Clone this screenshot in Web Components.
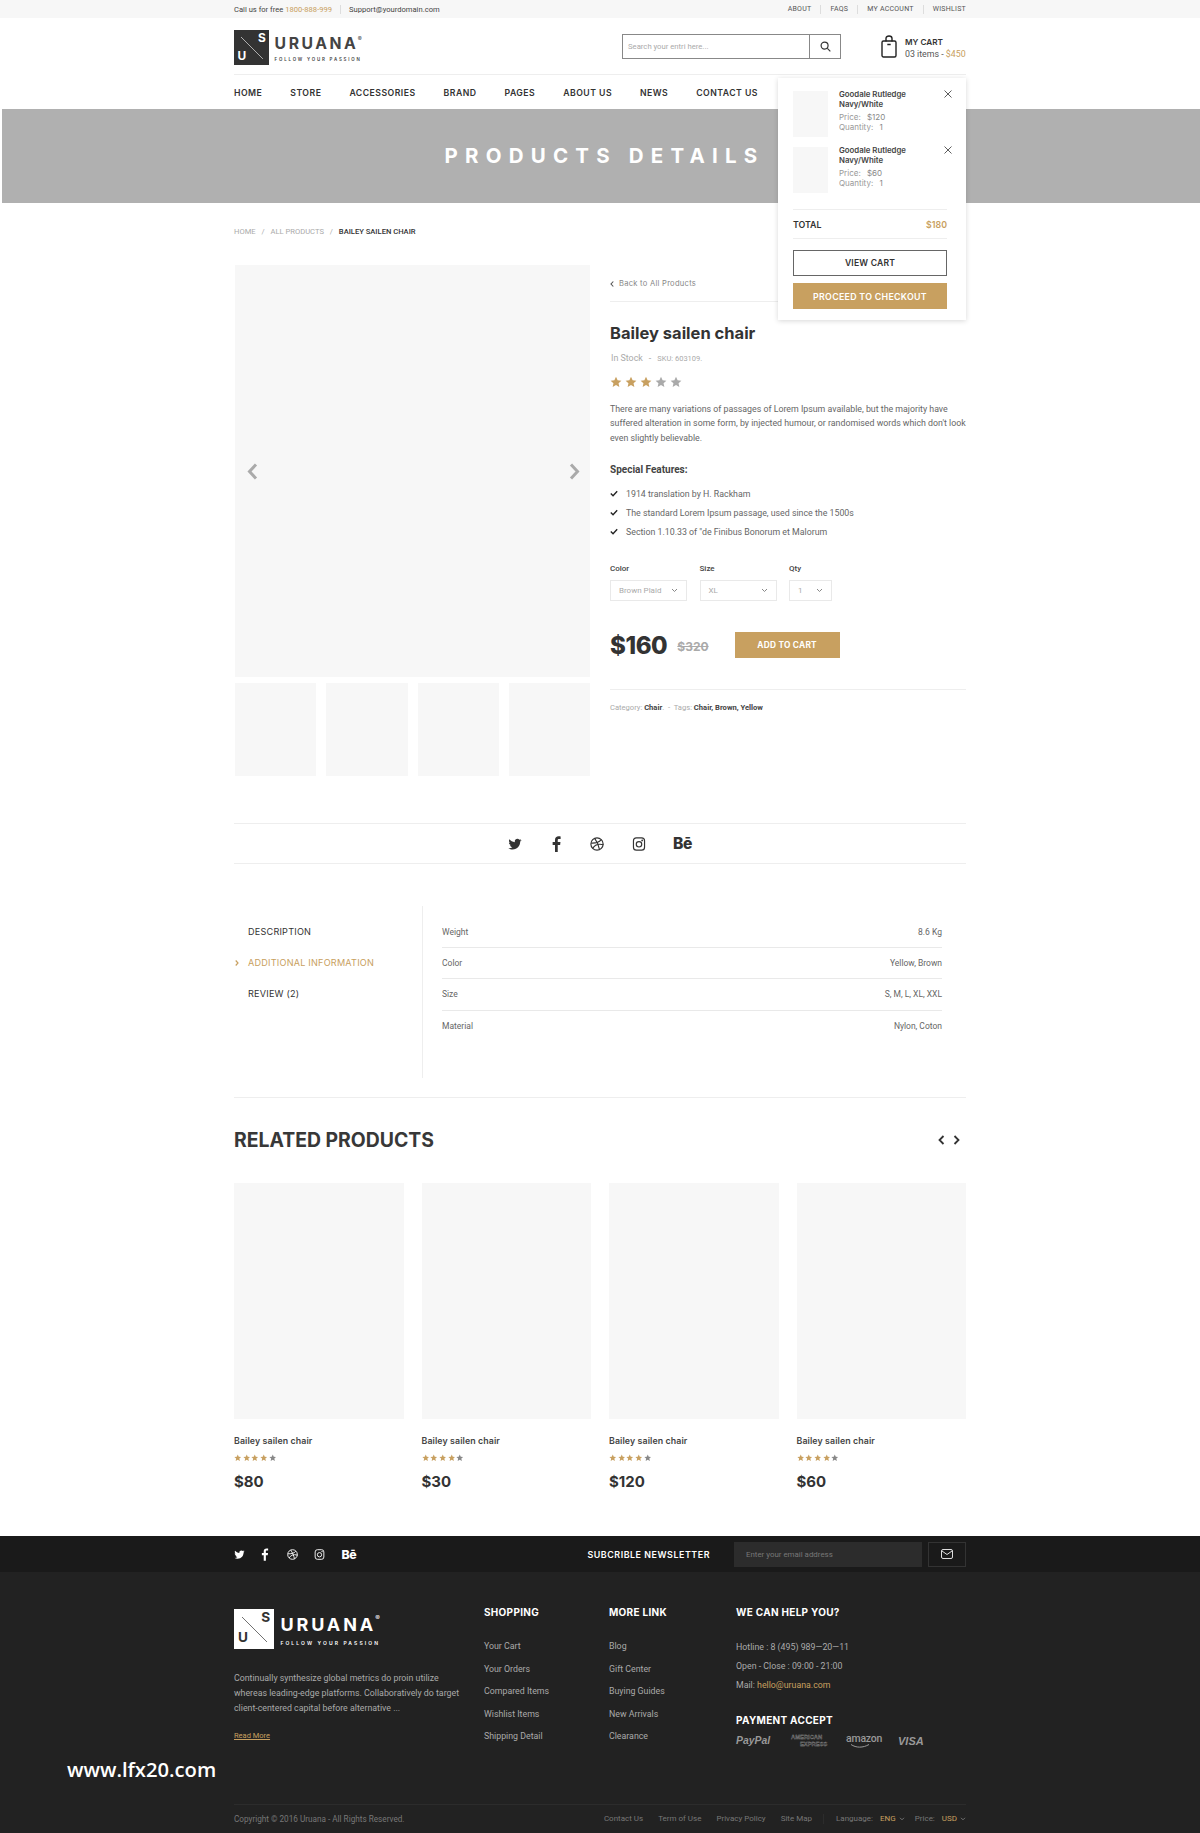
<!DOCTYPE html>
<html lang="en">
<head>
<meta charset="utf-8">
<title>Uruana - Products Details</title>
<style>
  html, body { margin: 0; padding: 0; background: #fff; }
  body { width: 1200px; height: 1833px; overflow: hidden; position: relative; font-family: Roboto, "Liberation Sans", sans-serif; color: #666; }
</style>
</head>
<body>
<top-bar></top-bar>
<site-header></site-header>
<page-hero>PRODUCTS DETAILS</page-hero>
<bread-crumb></bread-crumb>
<product-main></product-main>
<share-row></share-row>
<product-tabs></product-tabs>
<related-products></related-products>
<site-footer></site-footer>
<water-mark>www.lfx20.com</water-mark>

<script>
const HEAD = 'Inter, "Liberation Sans", sans-serif';
const GOLD = '#c8a060';

class UiElement extends HTMLElement {
  constructor() {
    super();
    this.attachShadow({ mode: 'open' });
  }
  connectedCallback() {
    this.shadowRoot.innerHTML = this.getTemplate();
  }
}

// --- small pieces ---
class BrandLogo extends UiElement {
  getTemplate() {
    const light = this.hasAttribute('light');
    const box = light ? '#fff' : '#333';
    const ink = light ? '#333' : '#fff';
    const word = light ? '#fff' : '#444';
    return `
      <style>
        :host { display: flex; align-items: flex-start; font-family: ${HEAD}; }
        .box { width: 1em; height: 1em; background: ${box}; color: ${ink}; position: relative; flex: none; }
        .box svg { position: absolute; inset: 0; width: 100%; height: 100%; }
        .s, .u { position: absolute; font-size: .34em; font-weight: 700; line-height: 1; }
        .s { right: .28em; top: .2em; }
        .u { left: .3em; bottom: .28em; }
        .txt { margin-left: .16em; color: ${word}; }
        .name { font-size: .45em; font-weight: 700; letter-spacing: .16em; line-height: 1; margin-top: .4em; position: relative; white-space: nowrap; width: max-content; }
        .name sup { position: absolute; top: -.1em; left: 100%; margin-left: -.12em; font-size: .38em; line-height: 1; font-weight: 400; letter-spacing: 0; }
        .tag { font-size: .125em; font-weight: 600; letter-spacing: .42em; margin-top: 1.4em; white-space: nowrap; line-height: 1; }
      </style>
      <div class="box">
        <svg viewBox="0 0 40 40"><line x1="8" y1="8" x2="33" y2="33" stroke="${ink}" stroke-width=".7"/></svg>
        <span class="s">S</span><span class="u">U</span>
      </div>
      <div class="txt">
        <div class="name">URUANA<sup>®</sup></div>
        <div class="tag">FOLLOW YOUR PASSION</div>
      </div>
    `;
  }
}
customElements.define('brand-logo', BrandLogo);

class StarRating extends UiElement {
  getTemplate() {
    const on = +this.getAttribute('value');
    const off = this.getAttribute('off') || '#aaa';
    let stars = '';
    for (let i = 0; i < 5; i++) {
      stars += `<svg viewBox="0 0 24 24"><path fill="${i < on ? GOLD : off}" d="M12 1.5l3.2 7 7.6.8-5.7 5.1 1.6 7.6L12 18.1 5.3 22l1.6-7.6L1.2 9.3l7.6-.8z"/></svg>`;
    }
    return `
      <style>
        :host { display: flex; gap: var(--gap, 4px); }
        svg { width: var(--size, 11px); height: var(--size, 11px); display: block; }
      </style>
      ${stars}
    `;
  }
}
customElements.define('star-rating', StarRating);

class SocialIcons extends UiElement {
  getTemplate() {
    return `
      <style>
        :host { display: flex; align-items: center; gap: var(--gap, 28px); color: inherit; }
        svg { width: var(--size, 14px); height: var(--size, 14px); display: block; }
        .f { transform: scale(1.2); margin-left: var(--f-shift, 0); }
        .be { font-family: ${HEAD}; font-weight: 800; font-size: calc(var(--size, 14px) * 1.12); line-height: 1; letter-spacing: -.03em; position: relative; top: var(--be-top, 0); }
      </style>
      <svg viewBox="0 0 24 24"><path fill="currentColor" d="M23 5.3c-.8.4-1.7.6-2.6.7.9-.6 1.7-1.4 2-2.5-.9.5-1.9.9-2.9 1.1C18.7 3.7 17.5 3.2 16.2 3.2c-2.5 0-4.6 2-4.6 4.6 0 .4 0 .7.1 1C7.9 8.6 4.5 6.8 2.3 4c-.4.7-.6 1.5-.6 2.3 0 1.6.8 3 2 3.8-.8 0-1.5-.2-2.1-.6v.1c0 2.2 1.6 4.1 3.7 4.5-.7.2-1.4.2-2.1.1.6 1.8 2.3 3.2 4.3 3.2-1.6 1.2-3.6 2-5.7 2-.4 0-.7 0-1.1-.1 2 1.3 4.5 2.1 7.1 2.1 8.5 0 13.1-7 13.1-13.1v-.6c.9-.6 1.7-1.5 2.1-2.3z"/></svg>
      <svg class="f" viewBox="0 0 24 24"><path fill="currentColor" d="M14.5 23.5V13.3h3.4l.5-4h-3.9V6.8c0-1.2.3-1.9 2-1.9h2.1V1.3C18.2 1.2 17 1.1 15.7 1.1c-3 0-5.1 1.8-5.1 5.2v3H7.2v4h3.4v10.2z"/></svg>
      <svg viewBox="0 0 24 24" fill="none" stroke="currentColor" stroke-width="2"><circle cx="12" cy="12" r="10.5"/><path d="M8 2.4c3.5 4.500 6.800 11.500 8.300 19.100M2 10.500c6.500.3 13-.6 17-5.500M4.700 19.500c3-5.500 9-8.500 18.500-6.300"/></svg>
      <svg viewBox="0 0 24 24" fill="none" stroke="currentColor" stroke-width="2"><rect x="2.5" y="1.5" width="19" height="21" rx="5"/><circle cx="12" cy="12.5" r="4.7"/><circle cx="17.5" cy="5.8" r=".6"/></svg>
      <span class="be">Bē</span>
    `;
  }
}
customElements.define('social-icons', SocialIcons);

class FakeSelect extends UiElement {
  getTemplate() {
    return `
      <style>
        :host { display: block; font-size: 8px; line-height: 10px; color: #444; font-weight: 500; width: var(--w, 77px); }
        .box { height: 21px; margin-top: 5px; border: 1px solid #e9e9e9; box-sizing: border-box; display: flex; align-items: center; justify-content: space-between; padding: 0 8px; color: #aaa; font-weight: 400; }
        svg { width: 7px; height: 5px; }
      </style>
      <div style="height:12px;line-height:12px"><slot></slot></div>
      <div class="box">${this.getAttribute('value')}<svg viewBox="0 0 7 5"><path d="M1 1l2.5 2.5L6 1" fill="none" stroke="#888" stroke-width="1"/></svg></div>
    `;
  }
}
customElements.define('fake-select', FakeSelect);

// --- header ---
class TopBar extends UiElement {
  getTemplate() {
    return `
      <style>
        :host { display: block; background: #f7f7f7; height: 18px; font-size: 7.6px; line-height: 19px; color: #444; }
        .wrap { width: 732px; margin: 0 auto; display: flex; justify-content: space-between; }
        .left, .right { display: flex; align-items: center; }
        b { font-weight: 400; color: ${GOLD}; }
        i { width: 1px; height: 9px; background: #ddd; }
        .left i { margin: 0 8px; }
        .right { letter-spacing: .25px; font-size: 7px; color: #555; }
        .right i { margin: 0 9px; }
      </style>
      <div class="wrap">
        <div class="left"><span>Call us for free <b>1800-888-999</b></span><i></i><span>Support@yourdomain.com</span></div>
        <div class="right"><span>ABOUT</span><i></i><span>FAQS</span><i></i><span>MY ACCOUNT</span><i></i><span>WISHLIST</span></div>
      </div>
    `;
  }
}
customElements.define('top-bar', TopBar);

class CartLine extends UiElement {
  getTemplate() {
    return `
      <style>
        :host { display: flex; gap: 11px; height: 46px; position: relative; font-size: 8px; line-height: 10px; color: #999; }
        .pic { width: 35px; height: 46px; background: #f7f7f7; flex: none; }
        .name { font-family: ${HEAD}; font-weight: 600; font-size: 7.8px; color: #444; line-height: 10px; margin-top: -2px; width: 86px; height: 20px; margin-bottom: 3px; }
        .meta span { color: #888; margin-left: 4px; }
        svg { position: absolute; right: -5px; top: -1px; width: 8px; height: 8px; }
      </style>
      <div class="pic"></div>
      <div>
        <div class="name"><slot></slot></div>
        <div class="meta">Price:<span> $${this.getAttribute('price')}</span></div>
        <div class="meta">Quantity:<span> 1</span></div>
      </div>
      <svg viewBox="0 0 8 8"><path d="M.5.5l7 7M7.5.5l-7 7" stroke="#333" stroke-width=".8"/></svg>
    `;
  }
}
customElements.define('cart-line', CartLine);

class CartDropdown extends UiElement {
  getTemplate() {
    return `
      <style>
        :host { display: block; position: absolute; right: 0; top: 60px; width: 188px; height: 242px; box-sizing: border-box; background: #fff; box-shadow: 0 1px 5px rgba(0,0,0,.16); padding: 13px 19px 0 15px; z-index: 5; font-family: ${HEAD}; }
        cart-line { margin-bottom: 10px; }
        .total { margin-top: 16px; height: 30px; box-sizing: border-box; border-top: 1px solid #eee; border-bottom: 1px solid #eee; display: flex; justify-content: space-between; align-items: center; font-size: 8.8px; font-weight: 600; color: #333; }
        .total b { color: ${GOLD}; font-weight: 600; }
        .btn { height: 26px; box-sizing: border-box; display: flex; align-items: center; justify-content: center; font-weight: 600; }
        .view { margin-top: 11px; border: 1px solid #666; color: #333; font-size: 8.6px; letter-spacing: .2px; }
        .go { margin-top: 7px; background: ${GOLD}; color: #fff; font-size: 8.8px; letter-spacing: .3px; }
      </style>
      <cart-line price="120">Goodale Rutledge Navy/White</cart-line>
      <cart-line price="60">Goodale Rutledge Navy/White</cart-line>
      <div class="total"><span>TOTAL</span><b>$180</b></div>
      <div class="btn view">VIEW CART</div>
      <div class="btn go">PROCEED TO CHECKOUT</div>
    `;
  }
}
customElements.define('cart-dropdown', CartDropdown);

class SiteHeader extends UiElement {
  getTemplate() {
    const nav = ['HOME', 'STORE', 'ACCESSORIES', 'BRAND', 'PAGES', 'ABOUT US', 'NEWS', 'CONTACT US'];
    return `
      <style>
        :host { display: block; height: 91px; }
        .wrap { width: 732px; margin: 0 auto; position: relative; }
        .top { height: 57px; box-sizing: border-box; border-bottom: 1px solid #eee; display: flex; align-items: flex-start; padding-top: 12px; }
        brand-logo { font-size: 35px; }
        .search { margin-left: auto; margin-top: 4px; width: 219px; height: 25px; box-sizing: border-box; border: 1px solid #888; display: flex; font-size: 7.7px; color: #aaa; }
        .search span { flex: 1; line-height: 24px; padding-left: 5px; }
        .search div { width: 30px; border-left: 1px solid #888; display: flex; align-items: center; justify-content: center; }
        .search svg { width: 11px; height: 11px; }
        .cart { width: 85px; margin-left: 40px; margin-top: 5px; display: flex; font-size: 8.8px; line-height: 11.5px; color: #555; white-space: nowrap; }
        .cart svg { width: 16px; height: 23px; margin-right: 8px; flex: none; }
        .cart b { display: block; color: #333; font-family: ${HEAD}; font-weight: 600; font-size: 8.2px; margin-top: 2px; }
        .cart em { font-style: normal; color: ${GOLD}; }
        nav { height: 34px; padding-top: 1px; box-sizing: border-box; display: flex; gap: 28px; align-items: center; font-family: ${HEAD}; font-weight: 600; font-size: 8.7px; letter-spacing: .47px; color: #333; }
      </style>
      <div class="wrap">
        <div class="top">
          <brand-logo></brand-logo>
          <div class="search"><span>Search your entri here...</span>
            <div><svg viewBox="0 0 12 12" fill="none" stroke="#333" stroke-width="1.3"><circle cx="5" cy="5" r="3.8"/><path d="M8 8l3.3 3.3"/></svg></div>
          </div>
          <div class="cart">
            <svg viewBox="0 0 16 23" fill="none" stroke="#222" stroke-width="1.4"><rect x="1" y="6" width="14" height="16" rx="1.5"/><path d="M5 6.5V3.5C5 1.8 6.3 1 8 1s3 .8 3 2.5v3M6.3 9.5h3.4"/></svg>
            <div><b>MY CART</b>03 items - <em>$450</em></div>
          </div>
        </div>
        <nav>${nav.map((n) => `<span>${n}</span>`).join('')}</nav>
        <cart-dropdown></cart-dropdown>
      </div>
    `;
  }
}
customElements.define('site-header', SiteHeader);

class PageHero extends UiElement {
  getTemplate() {
    return `
      <style>
        :host { display: flex; align-items: center; justify-content: center; height: 94px; margin-left: 2px; background: #b0b0b0; color: #fff; font-family: ${HEAD}; font-weight: 700; font-size: 20.5px; letter-spacing: 7.2px; padding: 0 0 2px 7px; box-sizing: border-box; }
      </style>
      <slot></slot>
    `;
  }
}
customElements.define('page-hero', PageHero);

class BreadCrumb extends UiElement {
  getTemplate() {
    return `
      <style>
        :host { display: block; width: 732px; margin: 20px auto 0; height: 42px; line-height: 18px; font-size: 7.6px; color: #aaa; }
        i { font-style: normal; margin: 0 4px; }
        b { font-weight: 500; color: #333; }
      </style>
      HOME<i> / </i>ALL PRODUCTS<i> / </i><b>BAILEY SAILEN CHAIR</b>
    `;
  }
}
customElements.define('bread-crumb', BreadCrumb);

// --- product ---
class ProductGallery extends UiElement {
  getTemplate() {
    return `
      <style>
        :host { display: block; width: 355px; margin-left: 1px; flex: none; }
        .main { height: 412px; background: #f7f7f7; position: relative; }
        .main svg { position: absolute; top: 198px; width: 11px; height: 17px; }
        .thumbs { display: grid; grid-template-columns: repeat(4, 1fr); gap: 10px; margin-top: 6px; }
        .thumbs div { height: 93px; background: #f7f7f7; }
      </style>
      <div class="main">
        <svg style="left:12px" viewBox="0 0 11 17"><path d="M9 1.5L2.5 8.5 9 15.5" fill="none" stroke="#aaa" stroke-width="3"/></svg>
        <svg style="right:10px" viewBox="0 0 11 17"><path d="M2 1.5l6.5 7L2 15.5" fill="none" stroke="#aaa" stroke-width="3"/></svg>
      </div>
      <div class="thumbs"><div></div><div></div><div></div><div></div></div>
    `;
  }
}
customElements.define('product-gallery', ProductGallery);

class ProductInfo extends UiElement {
  getTemplate() {
    const check = '<svg viewBox="0 0 10 8"><path d="M1 4l2.8 2.8L9 1.2" fill="none" stroke="#222" stroke-width="1.7"/></svg>';
    return `
      <style>
        :host { display: block; width: 356px; flex: none; font-size: 8.8px; color: #666; }
        .back { height: 37px; line-height: 36px; box-sizing: border-box; border-bottom: 1px solid #eee; font-family: ${HEAD}; font-size: 7.6px; letter-spacing: .25px; color: #888; display: flex; align-items: center; gap: 5px; padding-top: 1px; }
        .back svg { width: 4px; height: 6px; }
        h1 { font-family: ${HEAD}; font-size: 16.5px; font-weight: 700; line-height: 20px; color: #333; margin: 21px 0 0; }
        .stock { margin-top: 8px; line-height: 14px; font-size: 8.9px; color: #aaa; padding-left: 1px; }
        .stock small { font-size: 7.5px; margin-left: 6px; }
        .stock i { font-style: normal; margin-left: 6px; }
        star-rating { margin-top: 10px; --size: 12px; --gap: 3px; height: 13px; }
        p { margin: 12.5px 0 0; line-height: 14.5px; }
        h4 { margin: 17.5px 0 0; font-size: 10px; line-height: 14px; font-weight: 700; color: #444; }
        ul { list-style: none; padding: 0; margin: 8px 0 0; }
        li { height: 19px; line-height: 19px; display: flex; align-items: center; gap: 8px; }
        li svg { width: 8px; height: 7px; margin-bottom: 2px; }
        .opts { display: flex; gap: 12.5px; margin-top: 21.5px; }
        .buy { display: flex; align-items: center; height: 26px; margin-top: 31px; }
        .now { font-family: ${HEAD}; font-weight: 800; font-size: 24px; color: #333; letter-spacing: -.4px; }
        .old { font-family: ${HEAD}; font-weight: 700; font-size: 12px; color: #aaa; text-decoration: line-through; margin: 3px 0 0 10px; }
        .add { margin-left: 26px; width: 105px; height: 26px; background: ${GOLD}; color: #fff; font-family: ${HEAD}; font-weight: 700; font-size: 8.3px; letter-spacing: .25px; display: flex; align-items: center; justify-content: center; }
        .meta { margin-top: 31px; border-top: 1px solid #eee; padding-top: 11px; line-height: 14px; font-size: 7.6px; color: #aaa; }
        .meta b { color: #444; font-weight: 700; }
      </style>
      <div class="back"><svg viewBox="0 0 4 6"><path d="M3.3.5L1 3l2.3 2.5" fill="none" stroke="#555" stroke-width="1.1"/></svg>Back to All Products</div>
      <h1>Bailey sailen chair</h1>
      <div class="stock">In Stock<i>-</i><small>SKU: 603109.</small></div>
      <star-rating value="3"></star-rating>
      <p>There are many variations of passages of Lorem Ipsum available, but the majority have suffered alteration in some form, by injected humour, or randomised words which don't look even slightly believable.</p>
      <h4>Special Features:</h4>
      <ul>
        <li>${check}1914 translation by H. Rackham</li>
        <li>${check}The standard Lorem Ipsum passage, used since the 1500s</li>
        <li>${check}Section 1.10.33 of "de Finibus Bonorum et Malorum</li>
      </ul>
      <div class="opts">
        <fake-select value="Brown Plaid">Color</fake-select>
        <fake-select value="XL">Size</fake-select>
        <fake-select value="1" style="--w:43px">Qty</fake-select>
      </div>
      <div class="buy"><span class="now">$160</span><span class="old">$320</span><div class="add">ADD TO CART</div></div>
      <div class="meta">Category: <b>Chair</b>. &nbsp;-&nbsp; Tags: <b>Chair, Brown, Yellow</b></div>
    `;
  }
}
customElements.define('product-info', ProductInfo);

class ProductMain extends UiElement {
  getTemplate() {
    return `
      <style>
        :host { display: flex; gap: 20px; width: 732px; margin: 0 auto; }
      </style>
      <product-gallery></product-gallery>
      <product-info></product-info>
    `;
  }
}
customElements.define('product-main', ProductMain);

class ShareRow extends UiElement {
  getTemplate() {
    return `
      <style>
        :host { display: flex; justify-content: center; align-items: center; width: 732px; height: 41px; box-sizing: border-box; margin: 47px auto 0; border-top: 1px solid #eee; border-bottom: 1px solid #eee; color: #333; }
        social-icons { --size: 14px; --gap: 27.5px; --f-shift: -1px; }
      </style>
      <social-icons></social-icons>
    `;
  }
}
customElements.define('share-row', ShareRow);

class ProductTabs extends UiElement {
  getTemplate() {
    const rows = [['Weight', '8.6 Kg'], ['Color', 'Yellow, Brown'], ['Size', 'S, M, L, XL, XXL'], ['Material', 'Nylon, Coton']];
    return `
      <style>
        :host { display: flex; width: 732px; height: 192px; box-sizing: border-box; margin: 42px auto 0; padding-bottom: 19px; border-bottom: 1px solid #eee; }
        .tabs { width: 188px; flex: none; padding-top: 11px; font-family: ${HEAD}; font-size: 9.1px; color: #333; letter-spacing: .22px; }
        .tabs div { height: 31.2px; line-height: 30px; padding-left: 14px; position: relative; white-space: nowrap; }
        .tabs .on { color: ${GOLD}; }
        .tabs svg { position: absolute; left: 1px; top: 12px; width: 4px; height: 6px; }
        .table { flex: 1; border-left: 1px solid #eee; padding: 11px 24px 0 19px; font-size: 8.5px; color: #666; }
        .row { display: flex; justify-content: space-between; height: 31.2px; line-height: 30px; box-sizing: border-box; border-bottom: 1px solid #e9e9e9; }
        .row:last-child { border-bottom: 0; }
      </style>
      <div class="tabs">
        <div>DESCRIPTION</div>
        <div class="on"><svg viewBox="0 0 4 6"><path d="M.7.5L3 3 .7 5.5" fill="none" stroke="${GOLD}" stroke-width="1.2"/></svg>ADDITIONAL INFORMATION</div>
        <div>REVIEW (2)</div>
      </div>
      <div class="table">
        ${rows.map((r) => `<div class="row"><span>${r[0]}</span><span>${r[1]}</span></div>`).join('')}
      </div>
    `;
  }
}
customElements.define('product-tabs', ProductTabs);

class ProductCard extends UiElement {
  getTemplate() {
    return `
      <style>
        :host { display: block; font-family: ${HEAD}; color: #333; }
        .pic { height: 236px; background: #f7f7f7; }
        .name { margin-top: 16px; line-height: 12px; font-size: 8.8px; font-weight: 600; letter-spacing: .1px; color: #444; }
        star-rating { margin-top: 7px; --size: 7.5px; --gap: 1.2px; height: 8px; }
        .price { margin-top: 10px; line-height: 20px; font-size: 15px; font-weight: 700; }
      </style>
      <div class="pic"></div>
      <div class="name"><slot></slot></div>
      <star-rating value="4" off="#888"></star-rating>
      <div class="price">${this.getAttribute('price')}</div>
    `;
  }
}
customElements.define('product-card', ProductCard);

class RelatedProducts extends UiElement {
  getTemplate() {
    return `
      <style>
        :host { display: block; width: 732px; margin: 30px auto 0; }
        .head { height: 24px; display: flex; justify-content: space-between; align-items: center; }
        h2 { margin: 0; font-family: ${HEAD}; font-size: 19.4px; font-weight: 700; color: #383838; }
        .arrows { display: flex; gap: 8px; margin-right: 6px; }
        .arrows svg { width: 7px; height: 10px; }
        .grid { display: grid; grid-template-columns: repeat(4, 1fr); gap: 18px; margin-top: 31px; }
      </style>
      <div class="head">
        <h2>RELATED PRODUCTS</h2>
        <div class="arrows">
          <svg viewBox="0 0 7 10"><path d="M5.5 1L1.5 5l4 4" fill="none" stroke="#333" stroke-width="1.8"/></svg>
          <svg viewBox="0 0 7 10"><path d="M1.5 1l4 4-4 4" fill="none" stroke="#333" stroke-width="1.8"/></svg>
        </div>
      </div>
      <div class="grid">
        <product-card price="$80">Bailey sailen chair</product-card>
        <product-card price="$30">Bailey sailen chair</product-card>
        <product-card price="$120">Bailey sailen chair</product-card>
        <product-card price="$60">Bailey sailen chair</product-card>
      </div>
    `;
  }
}
customElements.define('related-products', RelatedProducts);

// --- footer ---
class FooterColumn extends UiElement {
  getTemplate() {
    return `
      <style>
        :host { display: block; font-size: 8.8px; color: #aaa; }
        h5 { margin: 0 0 16.5px; font-family: ${HEAD}; font-size: 10px; font-weight: 700; line-height: 14px; color: #fff; letter-spacing: .3px; }
        ::slotted(div) { line-height: 22.5px; }
      </style>
      <h5>${this.getAttribute('title')}</h5>
      <slot></slot>
    `;
  }
}
customElements.define('footer-column', FooterColumn);

class SiteFooter extends UiElement {
  getTemplate() {
    const chev = '<svg viewBox="0 0 7 5"><path d="M1 1l2.5 2.5L6 1" fill="none" stroke="#888" stroke-width="1"/></svg>';
    return `
      <style>
        :host { display: block; margin-top: 44px; height: 298px; background: #222; color: #aaa; font-size: 8.8px; }
        .wrap { width: 732px; margin: 0 auto; }
        .strip { background: #1a1a1a; height: 36px; }
        .strip .wrap { display: flex; align-items: center; height: 36px; color: #fff; }
        social-icons { --size: 11px; --gap: 16.5px; --be-top: 1px; --f-shift: -2.5px; }
        .nl { margin-left: auto; font-family: ${HEAD}; font-weight: 600; font-size: 8.9px; letter-spacing: .55px; }
        .in { width: 188px; height: 25px; background: #2c2c2c; margin-left: 24px; font-size: 7.9px; color: #777; line-height: 25px; padding-left: 12px; box-sizing: border-box; }
        .send { width: 38px; height: 25px; margin-left: 6px; border: 1px solid #333; box-sizing: border-box; display: flex; align-items: center; justify-content: center; }
        .send svg { width: 12px; height: 10px; }
        .cols { height: 232px; box-sizing: border-box; padding-top: 32.5px; display: grid; grid-template-columns: 250px 125px 127px 1fr; }
        brand-logo { font-size: 40px; margin-top: 4px; }
        .about p { margin: 22.5px 0 0; line-height: 15px; width: 232px; }
        .more { display: inline-block; margin-top: 13.5px; line-height: 12px; font-size: 7.5px; color: ${GOLD}; text-decoration: underline; }
        .hours { padding-top: 3px; }
        .hours span { display: block; line-height: 18.75px; }
        .hours em { font-style: normal; color: ${GOLD}; }
        h5 { margin: 18.5px 0 0; font-family: ${HEAD}; font-size: 10px; font-weight: 700; line-height: 14px; color: #fff; letter-spacing: .3px; }
        .pay { display: flex; align-items: center; height: 28px; color: #999; }
        .pp { font-family: "Liberation Sans", sans-serif; font-style: italic; font-weight: 700; font-size: 10.4px; width: 55px; flex: none; }
        .ax { font-family: "Liberation Sans", sans-serif; font-size: 5.8px; font-weight: 700; line-height: 7px; width: 55px; flex: none; color: transparent; -webkit-text-stroke: .3px #999; }
        .ax span { display: block; }
        .ax span + span { padding-left: 9px; }
        .am { font-size: 10.5px; font-weight: 500; width: 52px; flex: none; position: relative; line-height: 12px; letter-spacing: -.2px; margin-top: -3px; }
        .am svg { position: absolute; left: 4px; top: 11px; width: 20px; height: 4px; }
        .vs { font-family: "Liberation Sans", sans-serif; font-style: italic; font-weight: 700; font-size: 11px; }
        .bar { height: 30px; box-sizing: border-box; border-top: 1px solid #2c2c2c; padding-bottom: 2px; display: flex; align-items: center; font-size: 8.2px; color: #777; }
        .bar .links { margin-left: auto; display: flex; align-items: center; gap: 15px; font-size: 8px; }
        .bar i { width: 1px; height: 10px; background: #2c2c2c; margin: 0 -3px 0 -4px; }
        .bar b { font-weight: 400; color: ${GOLD}; margin-left: 7px; }
        .bar span svg { width: 6px; height: 4px; margin-left: 3px; }
        .bar .lang { margin-right: -5px; }
      </style>
      <div class="strip"><div class="wrap">
        <social-icons></social-icons>
        <span class="nl">SUBCRIBLE NEWSLETTER</span>
        <div class="in">Enter your email address</div>
        <div class="send"><svg viewBox="0 0 12 10" fill="none" stroke="#ddd" stroke-width="1"><rect x=".5" y=".5" width="11" height="9" rx="1.5"/><path d="M1 2l5 3.5L11 2"/></svg></div>
      </div></div>
      <div class="wrap">
        <div class="cols">
          <div class="about">
            <brand-logo light></brand-logo>
            <p>Continually synthesize global metrics do proin utilize whereas leading-edge platforms. Collaboratively do target client-centered capital before alternative ...</p>
            <span class="more">Read More</span>
          </div>
          <footer-column title="SHOPPING">
            <div>Your Cart</div><div>Your Orders</div><div>Compared Items</div><div>Wishlist Items</div><div>Shipping Detail</div>
          </footer-column>
          <footer-column title="MORE LINK">
            <div>Blog</div><div>Gift Center</div><div>Buying Guides</div><div>New Arrivals</div><div>Clearance</div>
          </footer-column>
          <footer-column title="WE CAN HELP YOU?">
            <div class="hours">
              <span>Hotline : 8 (495) 989—20—11</span>
              <span>Open - Close : 09:00 - 21:00</span>
              <span>Mail: <em>hello@uruana.com</em></span>
            </div>
            <h5>PAYMENT ACCEPT</h5>
            <div class="pay">
              <span class="pp">PayPal</span>
              <span class="ax"><span>AMERICAN</span><span>EXPRESS</span></span>
              <span class="am">amazon<svg viewBox="0 0 20 4"><path d="M1 .5c5 3.5 12 3.5 18 0" fill="none" stroke="#999" stroke-width="1"/></svg></span>
              <span class="vs">VISA</span>
            </div>
          </footer-column>
        </div>
        <div class="bar">
          <span>Copyright © 2016 Uruana - All Rights Reserved.</span>
          <div class="links">
            <span>Contact Us</span><span>Term of Use</span><span>Privacy Policy</span><span>Site Map</span><i></i>
            <span class="lang">Language:<b>ENG</b>${chev}</span>
            <span>Price:<b>USD</b>${chev}</span>
          </div>
        </div>
      </div>
    `;
  }
}
customElements.define('site-footer', SiteFooter);

class WaterMark extends UiElement {
  getTemplate() {
    return `
      <style>
        :host { position: absolute; left: 67px; top: 1754px; font-family: "Open Sans", sans-serif; font-weight: 600; font-size: 20.2px; line-height: 30px; color: #fff; white-space: nowrap; }
      </style>
      <slot></slot>
    `;
  }
}
customElements.define('water-mark', WaterMark);
</script>
</body>
</html>
